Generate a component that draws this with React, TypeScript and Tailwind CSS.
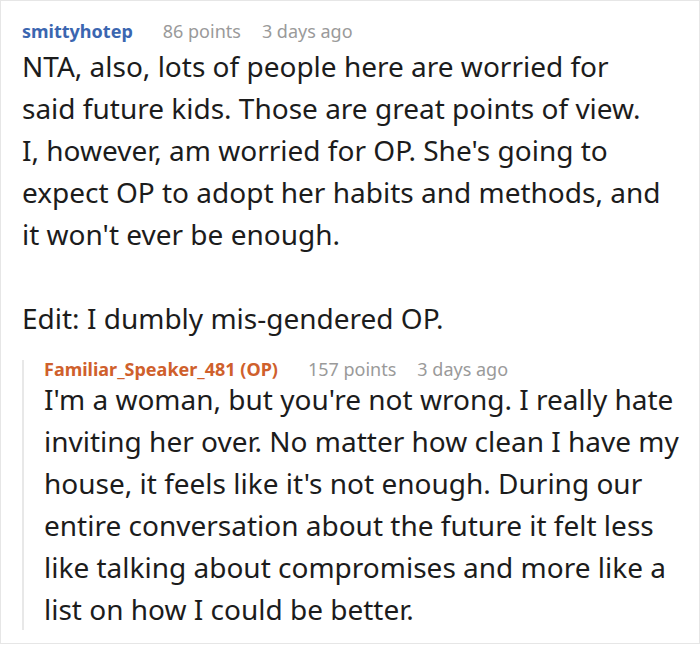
const Meta = ({ name, nameColor, points, ago }: { name: string; nameColor: string; points: number; ago: string }) => (
  <div className="flex items-baseline text-[18px] leading-[18px]">
    <span className={`font-bold ${nameColor}`}>{name}</span>
    <span className="ml-[30px] text-[#9a9a9a]">{points} points</span>
    <span className="ml-[21px] text-[#9a9a9a]">{ago}</span>
  </div>
);

const App = () => {
  return (
    <div
      className="h-[644px] w-[700px] border border-[#e6e6e6] bg-white pt-[21px] pl-[21px] text-[#1c1c1c]"
      style={{ fontFamily: '"Noto Sans", "Open Sans", sans-serif' }}
    >
      <div className="pr-[32px]">
        <Meta name="smittyhotep" nameColor="text-[#3b66b0]" points={86} ago="3 days ago" />
        <div className="mt-[5px] text-[28px] leading-[42px]">
          <p>
            NTA, also, lots of people here are worried for said future kids. Those are great points of view.
            <br />
            I, however, am worried for OP. She's going to expect OP to adopt her habits and methods, and it won't ever be
            enough.
          </p>
          <p className="mt-[42px]">Edit: I dumbly mis-gendered OP.</p>
        </div>
      </div>

      {/* reply */}
      <div className="mt-[29px] border-l-2 border-[#e8e8e8] pl-[20px] pr-[17px]">
        <div className="-mt-[8px]">
          <Meta name="Familiar_Speaker_481 (OP)" nameColor="text-[#cf602c]" points={157} ago="3 days ago" />
        </div>
        <p className="text-[28px] leading-[42px]">
          I'm a woman, but you're not wrong. I really hate inviting her over. No matter how clean I have my house, it feels
          like it's not enough. During our entire conversation about the future it felt less like talking about compromises
          and more like a list on how I could be better.
        </p>
      </div>
    </div>
  );
};

export default App;
